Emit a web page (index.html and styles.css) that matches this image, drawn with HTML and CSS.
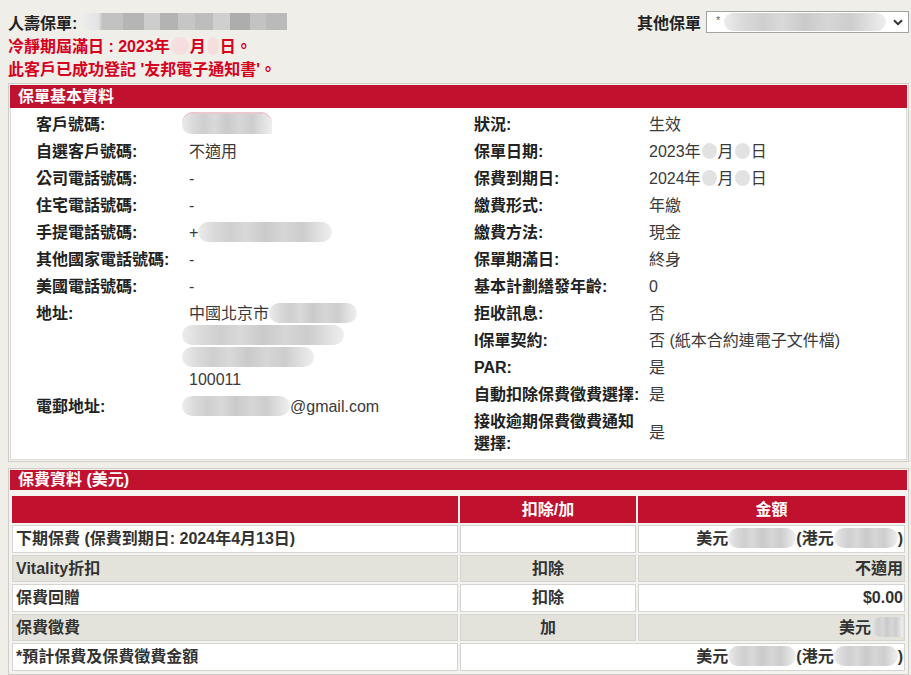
FILE: index.html
```html
<!DOCTYPE html>
<html lang="zh-Hant">
<head>
<meta charset="utf-8">
<title>人壽保單</title>
<link rel="stylesheet" href="styles.css">
</head>
<body>
<div class="page">
  <div class="top">
    <div class="title"><span>人壽保單:</span><span class="mosaic mosaic-title"></span></div>
    <div class="other">
      <span>其他保單</span>
      <div class="sel">
        <span class="star">*</span>
        <span class="blur blur-sel"></span>
        <svg class="chev" viewBox="0 0 10 7" width="10" height="7"><path d="M1 1.2 L5 5.2 L9 1.2" fill="none" stroke="#333" stroke-width="2"/></svg>
      </div>
    </div>
  </div>
  <div class="notice">冷靜期屆滿日 : 2023年<span class="dot dot-red"></span>月<span class="dot dot-red dot-s"></span>日。</div>
  <div class="notice">此客戶已成功登記 '友邦電子通知書'。</div>

  <section class="panel">
    <div class="panel-head">保單基本資料</div>
    <div class="panel-body">
      <div class="col col-left">
        <div class="cell lbl">客戶號碼:</div><div class="cell val"><span class="blur blur-id"></span></div>
        <div class="cell lbl">自選客戶號碼:</div><div class="cell val">不適用</div>
        <div class="cell lbl">公司電話號碼:</div><div class="cell val">-</div>
        <div class="cell lbl">住宅電話號碼:</div><div class="cell val">-</div>
        <div class="cell lbl">手提電話號碼:</div><div class="cell val">+<span class="blur blur-phone"></span></div>
        <div class="cell lbl">其他國家電話號碼:</div><div class="cell val">-</div>
        <div class="cell lbl">美國電話號碼:</div><div class="cell val">-</div>
        <div class="cell lbl">地址:</div>
        <div class="cell val">
          <div>中國北京市<span class="blur blur-addr1"></span></div>
          <div class="addr-line"><span class="blur blur-addr2"></span></div>
          <div class="addr-line"><span class="blur blur-addr3"></span></div>
          <div>100011</div>
        </div>
        <div class="cell lbl">電郵地址:</div><div class="cell val"><span class="blur blur-mail"></span>@gmail.com</div>
      </div>
      <div class="col col-right">
        <div class="cell lbl">狀況:</div><div class="cell val">生效</div>
        <div class="cell lbl">保單日期:</div><div class="cell val">2023年<span class="dot"></span>月<span class="dot"></span>日</div>
        <div class="cell lbl">保費到期日:</div><div class="cell val">2024年<span class="dot"></span>月<span class="dot"></span>日</div>
        <div class="cell lbl">繳費形式:</div><div class="cell val">年繳</div>
        <div class="cell lbl">繳費方法:</div><div class="cell val">現金</div>
        <div class="cell lbl">保單期滿日:</div><div class="cell val">終身</div>
        <div class="cell lbl">基本計劃繕發年齡:</div><div class="cell val">0</div>
        <div class="cell lbl">拒收訊息:</div><div class="cell val">否</div>
        <div class="cell lbl">I保單契約:</div><div class="cell val">否 (紙本合約連電子文件檔)</div>
        <div class="cell lbl">PAR:</div><div class="cell val">是</div>
        <div class="cell lbl">自動扣除保費徵費選擇:</div><div class="cell val">是</div>
        <div class="cell lbl">接收逾期保費徵費通知選擇:</div><div class="cell val mid">是</div>
      </div>
    </div>
  </section>

  <section class="panel panel-fees">
    <div class="panel-head panel-head-sm">保費資料 (美元)</div>
    <table class="fee-table">
      <colgroup><col><col class="c2"><col class="c3"></colgroup>
      <thead>
        <tr><th></th><th>扣除/加</th><th>金額</th></tr>
      </thead>
      <tbody>
        <tr><td>下期保費 (保費到期日: 2024年4月13日)</td><td></td><td class="amt">美元<span class="blur blur-amt"></span>(港元<span class="blur blur-amt2"></span>)</td></tr>
        <tr class="alt"><td>Vitality折扣</td><td class="ctr">扣除</td><td class="amt">不適用</td></tr>
        <tr><td>保費回贈</td><td class="ctr">扣除</td><td class="amt">$0.00</td></tr>
        <tr class="alt"><td>保費徵費</td><td class="ctr">加</td><td class="amt">美元<span class="blur blur-amt3"></span></td></tr>
        <tr><td>*預計保費及保費徵費金額</td><td class="amt" colspan="2">美元<span class="blur blur-amt"></span>(港元<span class="blur blur-amt2"></span>)</td></tr>
      </tbody>
    </table>
  </section>
</div>
</body>
</html>
```

FILE: styles.css
```css
html, body {
  margin: 0;
  background: #efeee9;
}

body {
  font-family: "Liberation Sans", "Noto Sans CJK TC", sans-serif;
  font-size: 16px;
  color: #3a3a3a;
}

.page {
  padding: 8px 2px 0 8px;
}

.top {
  display: flex;
  justify-content: space-between;
  align-items: center;
  height: 27px;
}

.title {
  display: flex;
  align-items: center;
  gap: 5px;
  font-weight: 700;
  color: #222;
}

.mosaic {
  display: inline-block;
  height: 17px;
  border-radius: 8px 0 0 8px;
}

.mosaic-title {
  width: 205px;
  background: linear-gradient(90deg,
    #ececec 0, #e4e4e4 8%, #c2c2c2 10%, #c2c2c2 20%, #b5b5b5 20%, #b5b5b5 30%,
    #cdcdcd 30%, #cdcdcd 38%, #b3b3b3 38%, #b3b3b3 47%, #c6c6c6 47%, #c6c6c6 55%,
    #bdbdbd 55%, #bdbdbd 64%, #cfcfcf 64%, #cfcfcf 72%, #adadad 72%, #adadad 82%,
    #c3c3c3 82%, #c3c3c3 90%, #bababa 90%, #bababa 100%);
}

.other {
  display: flex;
  align-items: center;
  gap: 5px;
  font-weight: 700;
  color: #222;
}

.sel {
  box-sizing: border-box;
  width: 203px;
  height: 22px;
  margin-top: 1px;
  border: 1px solid #a3a3a3;
  background: #fff;
  display: flex;
  align-items: center;
  padding: 0 5px 0 9px;
  gap: 4px;
}

.star {
  font-size: 11px;
  font-weight: 400;
  color: #666;
  line-height: 1;
  margin-top: -4px;
}

.chev {
  margin-left: auto;
}

.blur {
  display: inline-block;
  height: 20px;
  vertical-align: middle;
  border-radius: 10px;
  background: linear-gradient(90deg,
    #ececec 0, #dadada 12%, #cfcfcf 24%, #d9d9d9 36%, #cacaca 50%,
    #d6d6d6 64%, #cdcdcd 78%, #e0e0e0 90%, #efefef 100%);
  margin-top: -3px;
}

.blur-sel { width: 162px; height: 18px; margin-top: 0; }
.blur-id { width: 90px; margin-left: -7px; box-shadow: 0 -2px 0 #e9c9cf; border-radius: 12px 12px 2px 10px; }
.blur-phone { width: 134px; }
.blur-addr1 { width: 88px; }
.blur-addr2 { width: 162px; margin-left: -7px; }
.blur-addr3 { width: 132px; margin-left: -7px; }
.blur-mail { width: 108px; margin-left: -7px; }
.blur-amt { width: 68px; }
.blur-amt2 { width: 64px; }
.blur-amt3 { width: 32px; border-radius: 10px 0 0 10px; }

.dot {
  display: inline-block;
  width: 15px;
  height: 16px;
  border-radius: 50%;
  background: #e2e2e2;
  vertical-align: middle;
  margin: -3px 1px 0;
}

.dot-red {
  background: #f6dede;
  width: 18px;
  height: 18px;
}

.dot-s {
  width: 12px;
}

.notice {
  color: #d6001c;
  font-weight: 700;
  line-height: 23px;
}

.panel {
  border: 1px solid #cecdc7;
  padding: 1px;
  margin-top: 2px;
  background: #f4f3ef;
}

.panel-head {
  background: #c0112e;
  color: #fff;
  font-weight: 700;
  height: 23px;
  line-height: 23px;
  padding-left: 8px;
}

.panel-head-sm {
  height: 20px;
  line-height: 20px;
}

.panel-body {
  display: flex;
  background: #fff;
  border: 1px solid #dddbd5;
  border-top: 0;
  padding: 3.5px 0 1px 25px;
}

.col {
  display: grid;
  align-content: start;
  align-items: start;
}

.col-left {
  width: 438px;
  grid-template-columns: 153px 1fr;
}

.col-right {
  flex: 1;
  grid-template-columns: 175px 1fr;
}

.cell {
  padding: 2.5px 0;
  line-height: 22px;
}

.lbl {
  font-weight: 700;
  color: #222;
}

.val {
  color: #3a3a3a;
}

.mid {
  align-self: center;
}

.panel-fees {
  margin-top: 6px;
}

.fee-table {
  width: 100%;
  table-layout: fixed;
  border-collapse: separate;
  border-spacing: 2px;
  margin-top: 4px;
}

.fee-table .c2 { width: 176px; }
.fee-table .c3 { width: 267px; }

.fee-table th,
.fee-table td {
  border: 1px solid #d4d4d0;
  padding: 2px 3px;
  line-height: 21.5px;
  font-weight: 700;
  color: #333;
  background: #fff;
  text-align: left;
  white-space: nowrap;
  overflow: hidden;
}

.fee-table th {
  background: #c0112e;
  border-color: #c0112e;
  color: #fff;
  text-align: center;
}

.fee-table .alt td {
  background: #e4e3db;
}

.fee-table .ctr {
  text-align: center;
}

.fee-table .amt {
  text-align: right;
  padding-right: 1px;
}
```
